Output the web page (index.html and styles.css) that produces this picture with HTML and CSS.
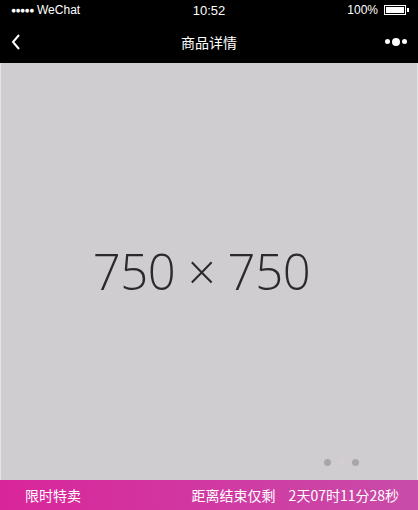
FILE: index.html
```html
<!DOCTYPE html>
<html lang="zh">
<head>
<meta charset="utf-8">
<link rel="stylesheet" href="styles.css">
</head>
<body>
<div class="phone">
  <div class="status">
    <div class="status-left"><span class="signal">●●●●●</span> WeChat</div>
    <div class="status-time">10:52</div>
    <div class="status-right">100% <span class="battery"><span class="battery-fill"></span></span><span class="battery-tip"></span></div>
  </div>
  <div class="nav">
    <svg class="back" width="12" height="18" viewBox="0 0 12 18"><path d="M9 2 L3 9 L9 16" fill="none" stroke="#fff" stroke-width="2"/></svg>
    <div class="title">商品详情</div>
    <div class="more"><span class="d s"></span><span class="d b"></span><span class="d s"></span></div>
  </div>
  <div class="hero">
    <div class="placeholder">750 × 750</div>
    <div class="dots"><span class="dot"></span><span class="dot active"></span><span class="dot"></span></div>
  </div>
  <div class="sale">
    <div class="sale-label">限时特卖</div>
    <div class="sale-time">距离结束仅剩<span class="count">2天07时11分28秒</span></div>
  </div>
</div>
</body>
</html>
```

FILE: styles.css
```css
* { box-sizing: border-box; }
html, body { margin: 0; padding: 0; }
body { width: 418px; height: 510px; overflow: hidden; background: #fff; font-family: "Liberation Sans", "Noto Sans CJK SC", sans-serif; }
.phone { display: flex; flex-direction: column; height: 510px; }
.status { height: 20px; background: #000; color: #fff; font-size: 12px; display: flex; align-items: center; justify-content: space-between; padding: 0 9px 0 11px; position: relative; }
.signal { font-size: 8.5px; letter-spacing: -0.6px; vertical-align: 1px; }
.status-time { position: absolute; left: 0; right: 0; text-align: center; font-size: 13px; }
.status-right { display: flex; align-items: center; gap: 0; }
.battery { display: inline-block; width: 22px; height: 10px; border: 1px solid #fff; margin-left: 6px; padding: 1px; }
.battery-fill { display: block; width: 100%; height: 100%; background: #fff; }
.battery-tip { display: inline-block; width: 2px; height: 4px; background: #fff; margin-left: 1px; }
.nav { height: 43px; background: #000; display: flex; align-items: center; justify-content: space-between; padding: 0 11px 0 10px; position: relative; }
.back { display: block; }
.title { position: absolute; left: 0; right: 0; text-align: center; color: #fff; font-size: 14px; font-family: "Noto Sans CJK SC", sans-serif; }
.more { display: flex; align-items: center; gap: 2px; }
.d { display: block; border-radius: 50%; background: #fff; }
.d.s { width: 5px; height: 5px; }
.d.b { width: 8px; height: 8px; }
.hero { flex: 1; background: #cfcdd0; display: flex; align-items: center; justify-content: center; position: relative; border-left: 1px solid #e4e3e5; border-right: 1px solid #e4e3e5; }
.placeholder { font-family: "Open Sans", sans-serif; font-weight: 300; font-size: 49px; color: #2a2a2c; margin-top: -2px; letter-spacing: -0.4px; padding-right: 15px; }
.dots { position: absolute; right: 58px; bottom: 14px; display: flex; gap: 7px; }
.dot { width: 7px; height: 7px; border-radius: 50%; background: #a8a6a9; }
.dot.active { background: #d6cdd3; }
.sale { height: 30px; background: linear-gradient(to right, #d9259a, #c84ca9); color: #fff; display: flex; align-items: center; justify-content: space-between; padding: 0 19px 0 25px; font-size: 14px; font-family: "Noto Sans CJK SC", sans-serif; }
.count { margin-left: 13px; }
```
